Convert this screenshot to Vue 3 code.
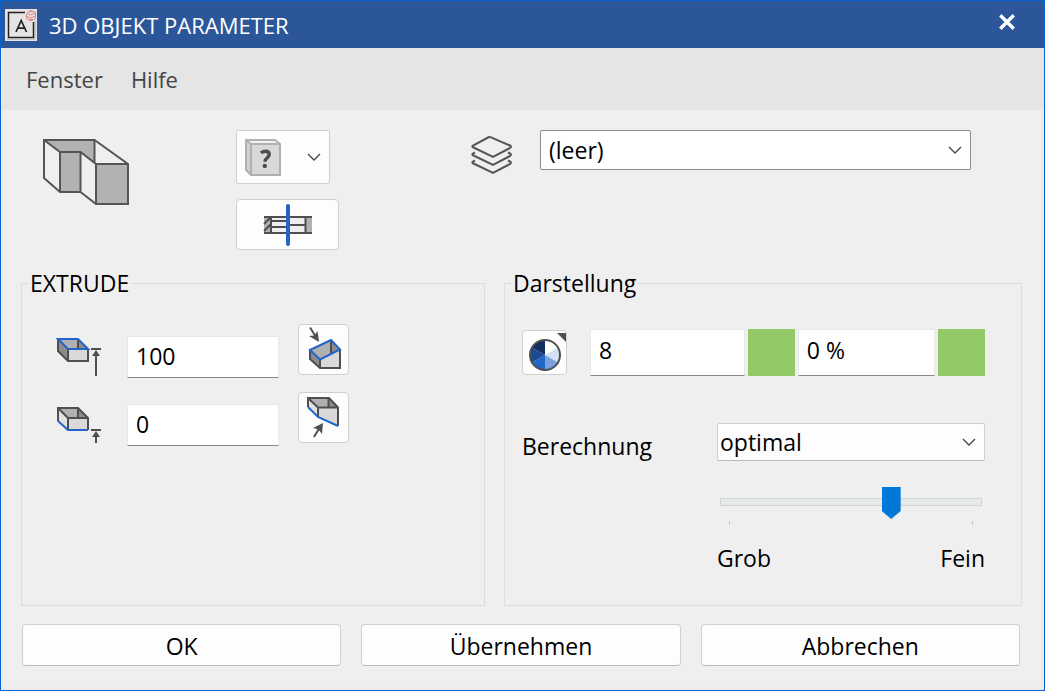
<script setup>
import { ref } from 'vue'

const layer = ref('(leer)')
const upper = ref('100')
const lower = ref('0')
const color = ref('8')
const transparency = ref('0 %')
const calculation = ref('optimal')
const quality = ref(6)
</script>

<template>
  <div class="window">
    <header class="titlebar">
      <svg class="app-icon" viewBox="0 0 32 32" aria-hidden="true">
        <rect width="32" height="32" fill="#e4e4e4" />
        <path d="M20 3.5H3.500V28.500H28.500V13" fill="none" stroke="#222" stroke-width="1.500" />
        <path d="M2 30H30V12" fill="none" stroke="#aaa" stroke-width="1" />
        <path d="M11 23 16.200 11.500 21.500 23M13 19.200H19.500" fill="none" stroke="#222" stroke-width="1.700" />
        <g fill="none" stroke="#dc8580" stroke-width="1">
          <path d="M22 3.500 26 1.500 30.500 3.500V9.500L26 12 21.500 9.500V5" />
          <path d="M22 4.500 26 6 30 4M22 7.500 26 9 30 7M24 2.800H28M24 10.500H28" />
        </g>
      </svg>
      <h1>3D OBJEKT PARAMETER</h1>
      <button class="close" type="button" aria-label="Schließen">
        <svg viewBox="0 0 16 16" aria-hidden="true"><path d="M2 2 14 14M14 2 2 14" /></svg>
      </button>
    </header>

    <nav class="menu">
      <button type="button">Fenster</button>
      <button type="button">Hilfe</button>
    </nav>

    <main class="content">
      <div class="top">
        <svg class="object-icon" viewBox="12 18 88 68" aria-hidden="true">
          <path d="M14 20H64.500V43L50.500 32H30ZM30 32H50.500V72H30ZM66 44H98V84H66Z" fill="#b2b2b2" />
          <path d="M14 20H64.500L98 44V84H66L50.500 72H30L14 58ZM14 20 30 32H50.500L66 44H98M30 32V72M50.500 32V72M66 44V84M64.500 20V43" fill="none" stroke="#555" stroke-width="2" />
        </svg>

        <div class="tools">
          <button class="tool material" type="button" aria-label="Material">
            <svg class="cube" viewBox="0 0 36 37" aria-hidden="true">
              <path d="M1 1H30L35 5V36H6L1 31Z" fill="#f1f1f1" />
              <path d="M1 1 6 5V36L1 31Z" fill="#d0d0d0" />
              <path d="M6 5H35V36H6Z" fill="#d9d9d9" />
              <path d="M1 1H30L35 5V36H6L1 31ZM1 1 6 5H35M6 5V36" fill="none" stroke="#b0b0b0" stroke-width="2" />
              <path d="M16 14Q18 12.300 20.500 12.300 24.200 12.300 24.200 15.600 24.200 17.500 22 19 20 20.500 20 22.800" fill="none" stroke="#4d4d4d" stroke-width="3.400" />
              <circle cx="19.800" cy="26.900" r="2.200" fill="#4d4d4d" />
            </svg>
            <svg class="chevron" viewBox="0 0 14 8" aria-hidden="true"><path d="M1 1 7 7 13 1" /></svg>
          </button>
          <button class="tool section" type="button" aria-label="Schnitt">
            <svg viewBox="38 83 50 44" aria-hidden="true">
              <path d="M39 97H87V113H39Z" fill="#eee" />
              <path d="M39 97H46V113H39ZM81 97H87V113H81Z" fill="#b0b0b0" />
              <path d="M39 97H87M39 113H87M46 97V113M46 101H62M46 107H62M64 105H80M80.500 97V113M39 104 45 98M39 111 46 104" fill="none" stroke="#4f4f4f" stroke-width="2" />
              <path d="M63 86V124" stroke="#2265c8" stroke-width="4" stroke-linecap="round" />
            </svg>
          </button>
        </div>

        <svg class="layers-icon" viewBox="0 0 42 40" aria-hidden="true">
          <path d="M18 2 2 10.500Q0.500 11.500 2.500 12.500L22 22 39 13Q41 11.500 39 10.500L19.500 2.200Q18.500 1.700 18 2Z" />
          <path d="M4 17.500 2 18.500Q0.500 19.500 2.500 20.500L22 30 39 21Q41 19.500 39 18.500L37 17.500" />
          <path d="M4 25.500 2 26.500Q0.500 27.500 2.500 28.500L22 38 39 29Q41 27.500 39 26.500L37 25.500" />
        </svg>

        <div class="select layer">
          <select v-model="layer" aria-label="Layer">
            <option>(leer)</option>
          </select>
          <svg class="chevron" viewBox="0 0 14 8" aria-hidden="true"><path d="M1 1 7 7 13 1" /></svg>
        </div>
      </div>

      <div class="groups">
        <fieldset class="extrude">
          <legend>EXTRUDE</legend>
          <div class="extrude-row">
            <svg class="height-icon" viewBox="0 0 46 42" aria-hidden="true">
              <path d="M2 3H22L32 13H12Z" fill="#b0b0b0" />
              <path d="M2 3 12 13V25L2 15Z" fill="#8c8c8c" />
              <path d="M22 3 32 13H22Z" fill="#8c8c8c" />
              <path d="M12 13H32V25H12Z" fill="#d9d9d9" />
              <path d="M2 3V15L12 25H32V13M12 13V25M22 4V12" fill="none" stroke="#4f4f4f" stroke-width="2" />
              <path d="M2 3H22L32 13H12Z" fill="none" stroke="#2265c8" stroke-width="2" />
              <path d="M35 13H45M40 40V18" fill="none" stroke="#4f4f4f" stroke-width="2" />
              <path d="M40 14 44 20H36Z" fill="#4f4f4f" />
            </svg>
            <input v-model="upper" type="text" aria-label="Oberkante">
            <button class="tool tilt" type="button" aria-label="Oberkante neigen">
              <svg viewBox="0 0 49 49" aria-hidden="true">
                <path d="M11 25 32 15 41 24.500 21 34.500Z" fill="#b0b0b0" />
                <path d="M11 25 21 34.500V43L11 34Z" fill="#8c8c8c" />
                <path d="M32 15 41 24.500 32 29Z" fill="#8c8c8c" />
                <path d="M21 34.500 41 24.500V43H21Z" fill="#d9d9d9" />
                <path d="M11 25V34L21 43H41V24.500M21 34.500V43M32 16V28" fill="none" stroke="#4f4f4f" stroke-width="2" />
                <path d="M11 25 32 15 41 24.500 21 34.500Z" fill="none" stroke="#2265c8" stroke-width="2" />
                <path d="M11 2.500 17 12" fill="none" stroke="#4f4f4f" stroke-width="2" />
                <path d="M20 17 10 11 15.500 10.500 18.500 6Z" fill="#4f4f4f" />
              </svg>
            </button>
          </div>
          <div class="extrude-row">
            <svg class="height-icon" viewBox="0 0 46 42" aria-hidden="true">
              <path d="M2 4H22L32 14H12Z" fill="#b0b0b0" />
              <path d="M2 4 12 14V26L2 16Z" fill="#e2e2e2" />
              <path d="M22 4 32 14H22Z" fill="#8c8c8c" />
              <path d="M12 14H32V26H12Z" fill="#d9d9d9" />
              <path d="M2 17V4H22L32 14V26M2 4 12 14H32M12 14V26M22 4V13" fill="none" stroke="#4f4f4f" stroke-width="2" />
              <path d="M2 17 12 26H32" fill="none" stroke="#2265c8" stroke-width="2" />
              <path d="M35 26H45M40 39V31" fill="none" stroke="#4f4f4f" stroke-width="2" />
              <path d="M40 27 44 33H36Z" fill="#4f4f4f" />
            </svg>
            <input v-model="lower" type="text" aria-label="Unterkante">
            <button class="tool tilt" type="button" aria-label="Unterkante neigen">
              <svg viewBox="0 0 49 49" aria-hidden="true">
                <path d="M9 5H30L39 14.500H19Z" fill="#b0b0b0" />
                <path d="M9 5 19 14.500V24L9 14Z" fill="#e2e2e2" />
                <path d="M30 5 39 14.500H30Z" fill="#8c8c8c" />
                <path d="M19 14.500H39V33L19 24Z" fill="#d9d9d9" />
                <path d="M9 14V5H30L39 14.500V33M9 5 19 14.500H39M19 14.500V24M29.500 5V14" fill="none" stroke="#4f4f4f" stroke-width="2" />
                <path d="M9 14 19 24 39 33" fill="none" stroke="#2265c8" stroke-width="2" />
                <path d="M15 44 21 34" fill="none" stroke="#4f4f4f" stroke-width="2" />
                <path d="M24 30 14 35 19.500 36.500 23 41Z" fill="#4f4f4f" />
              </svg>
            </button>
          </div>
        </fieldset>

        <fieldset class="display">
          <legend>Darstellung</legend>
          <div class="color-row">
            <button class="tool palette" type="button" aria-label="Farbe">
              <svg viewBox="0 0 43 43" aria-hidden="true">
                <path d="M22 24V9A15 15 0 0 1 35 16.500Z" fill="#fff" />
                <path d="M22 24 35 16.500A15 15 0 0 1 35 31.500Z" fill="#d3e1f4" />
                <path d="M22 24 35 31.500A15 15 0 0 1 22 39Z" fill="#7ba2dc" />
                <path d="M22 24V39A15 15 0 0 1 9 31.500Z" fill="#2265c8" />
                <path d="M22 24 9 31.500A15 15 0 0 1 9 16.500Z" fill="#1a4a94" />
                <path d="M22 24 9 16.500A15 15 0 0 1 22 9Z" fill="#12315f" />
                <circle cx="22" cy="24" r="15" fill="none" stroke="#4f4f4f" stroke-width="2" />
                <path d="M34 2H43V11Z" fill="#4f4f4f" />
              </svg>
            </button>
            <input v-model="color" class="color-value" type="text" aria-label="Farbnummer">
            <button class="swatch" type="button" aria-label="Farbe wählen"></button>
            <input v-model="transparency" class="transparency-value" type="text" aria-label="Transparenz">
            <button class="swatch" type="button" aria-label="Transparenz wählen"></button>
          </div>
          <div class="calc-row">
            <label for="calculation">Berechnung</label>
            <div class="select calc">
              <select id="calculation" v-model="calculation">
                <option>optimal</option>
              </select>
              <svg class="chevron" viewBox="0 0 14 8" aria-hidden="true"><path d="M1 1 7 7 13 1" /></svg>
            </div>
          </div>
          <div class="quality">
            <input v-model="quality" type="range" min="0" max="9" aria-label="Genauigkeit">
            <div class="ticks"><i></i><i></i></div>
            <div class="range-labels"><span>Grob</span><span>Fein</span></div>
          </div>
        </fieldset>
      </div>

      <footer class="actions">
        <button type="button">OK</button>
        <button type="button">Übernehmen</button>
        <button type="button">Abbrechen</button>
      </footer>
    </main>
  </div>
</template>

<style>
body {
  background: #efefef;
}
</style>

<style scoped>
.window,
.window * {
  box-sizing: border-box;
}

.window {
  display: flex;
  flex-direction: column;
  min-height: 100vh;
  border: 1px solid #0a64cf;
  background: #efefef;
  color: #000;
  font-family: "Segoe UI", "Open Sans", "Noto Sans", sans-serif;
  font-size: 23px;
  line-height: 32px;
}

button,
input,
select {
  margin: 0;
  color: inherit;
  font: inherit;
}

svg {
  display: block;
  flex: none;
}

.titlebar {
  display: flex;
  align-items: center;
  height: 47px;
  padding: 0 28px 0 4px;
  background: #2b579a;
  color: #fff;
}

.app-icon {
  width: 32px;
  height: 32px;
}

h1 {
  flex: 1;
  margin: 0 0 0 12px;
  font-size: 22px;
  font-weight: 400;
}

.close {
  padding: 0;
  border: 0;
  background: none;
}

.close svg {
  width: 18px;
  height: 18px;
  margin-bottom: 6px;
  fill: none;
  stroke: #fff;
  stroke-width: 3px;
}

.menu {
  display: flex;
  align-items: center;
  gap: 28px;
  height: 62px;
  padding: 0 25px;
  background: #e5e5e5;
  font-size: 22px;
}

.menu button {
  padding: 0;
  border: 0;
  background: none;
  color: #444;
}

.content {
  flex: 1;
  display: flex;
  flex-direction: column;
  padding: 20px 19px 21px 17px;
  border: solid #ebebeb;
  border-width: 0 3px 3px;
}

.top {
  display: flex;
  align-items: flex-start;
  margin-bottom: 17px;
  padding: 0 51px 0 21px;
}

.object-icon {
  width: 88px;
  height: 68px;
  margin-top: 8px;
}

.tools {
  display: flex;
  flex-direction: column;
  align-items: flex-start;
  gap: 15px;
  margin-left: 106px;
}

.tool {
  display: flex;
  align-items: center;
  padding: 0;
  border: 1px solid #d0d0d0;
  border-radius: 4px;
  background: #fdfdfd;
}

.chevron {
  width: 14px;
  height: 8px;
  fill: none;
  stroke: #444;
  stroke-width: 1.3px;
}

.material {
  gap: 26px;
  width: 94px;
  height: 54px;
  padding-left: 8px;
  border-radius: 2px;
}

.cube {
  width: 36px;
  height: 37px;
}

.section {
  justify-content: center;
  width: 103px;
  height: 51px;
}

.section svg {
  width: 50px;
  height: 44px;
}

.layers-icon {
  width: 42px;
  height: 40px;
  margin: 5px 27px 0 132px;
  fill: none;
  stroke: #555;
  stroke-width: 2px;
}

.select {
  position: relative;
  flex: 1;
}

.select select {
  display: block;
  width: 100%;
  height: 40px;
  padding: 0 36px 0 8px;
  border: 1px solid #8c8c8c;
  border-radius: 2px;
  appearance: none;
  background: #fff;
}

.select .chevron {
  position: absolute;
  top: 50%;
  right: 9px;
  margin-top: -4px;
  pointer-events: none;
}

.groups {
  flex: 1;
  display: grid;
  grid-template-columns: 464fr 518fr;
  gap: 19px;
}

fieldset {
  min-width: 0;
  margin: 0;
  border: 1px solid #dcdcdc;
}

legend {
  padding: 0 2px;
}

.extrude {
  padding: 25px 0 24px;
}

.extrude legend {
  margin-left: 6px;
}

.extrude-row {
  display: flex;
  align-items: flex-end;
  height: 54px;
  margin-bottom: 14px;
  padding-left: 34px;
}

.height-icon {
  width: 46px;
  height: 42px;
  margin-right: 25px;
}

input[type="text"] {
  min-width: 0;
  padding: 0 8px;
  border: 1px solid #e8e8e8;
  border-bottom-color: #868686;
  border-radius: 1px;
  background: #fff;
}

.extrude-row input[type="text"] {
  width: 152px;
  height: 42px;
  padding-bottom: 2px;
}

.tilt {
  align-self: flex-start;
  width: 51px;
  height: 51px;
  margin-left: 19px;
}

.tilt svg {
  width: 49px;
  height: 49px;
}

.display {
  padding: 30px 36px 24px 17px;
}

.display legend {
  margin-left: -11px;
}

.color-row {
  display: flex;
  align-items: center;
  gap: 3px;
}

.palette {
  width: 45px;
  height: 45px;
  margin-right: 20px;
}

.palette svg {
  width: 43px;
  height: 43px;
}

.color-row input[type="text"] {
  height: 47px;
  padding-bottom: 6px;
}

.color-row .color-value {
  flex: 156 1 0;
}

.color-row .transparency-value {
  flex: 136 1 0;
}

.swatch {
  width: 47px;
  height: 47px;
  padding: 0;
  border: 0;
  background: #94c967;
}

.calc-row {
  display: flex;
  align-items: center;
  margin-top: 46px;
}

.calc-row label {
  flex: 1;
  padding-top: 8px;
}

.calc {
  flex: none;
  width: 268px;
}

.calc select {
  height: 38px;
  padding-left: 2px;
  border-color: #cfcfcf;
  border-bottom-color: #b8b8b8;
  background: #fdfdfd;
}

.quality {
  width: 268px;
  margin: 24px 0 0 auto;
}

.quality input {
  display: block;
  width: 262px;
  height: 32px;
  margin: 0 3px;
  appearance: none;
  background: none;
}

.quality input::-webkit-slider-runnable-track {
  height: 8px;
  border: 1px solid #d3d5d5;
  background: #e6eaea;
}

.quality input::-webkit-slider-thumb {
  width: 19px;
  height: 32px;
  margin-top: -12px;
  appearance: none;
  background: #0078d7;
  clip-path: polygon(0 0, 100% 0, 100% 75%, 50% 100%, 0 75%);
}

.ticks {
  display: flex;
  justify-content: space-between;
  margin: 3px 12px 17px;
}

.ticks i {
  width: 1px;
  height: 4px;
  background: #c4c4c4;
}

.range-labels {
  display: flex;
  justify-content: space-between;
}

.actions {
  display: grid;
  grid-template-columns: repeat(3, 1fr);
  gap: 20px;
  margin-top: 18px;
  padding: 0 2px 0 1px;
}

.actions button {
  height: 42px;
  padding: 2px 0 0;
  border: 1px solid #d0d0d0;
  border-bottom-color: #bbb;
  border-radius: 4px;
  background: #fdfdfd;
}
</style>
